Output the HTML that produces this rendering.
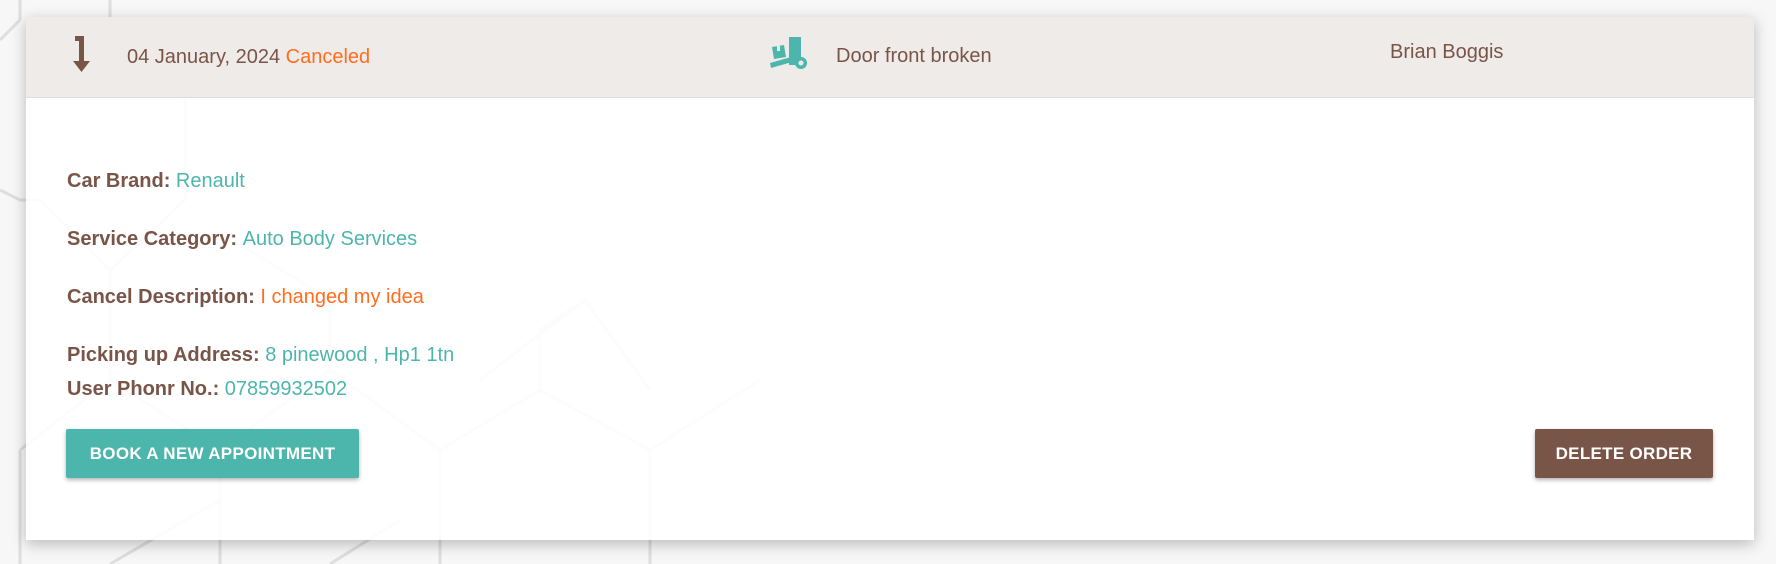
<!DOCTYPE html>
<html><head><meta charset="utf-8"><style>
html,body{margin:0;padding:0;}
body{width:1776px;height:564px;background:#f7f7f7;position:relative;overflow:hidden;font-family:"Liberation Sans",sans-serif;}
svg.bg{position:absolute;left:0;top:0;}
.card{position:absolute;left:26px;top:17px;width:1728px;height:523px;background:rgba(255,255,255,0.9);box-shadow:0 4px 14px rgba(0,0,0,0.25);}
.head{height:80px;background:#efebe9;border-bottom:1px solid #ddd;position:relative;color:#795548;font-size:20px;}
.head span{position:absolute;white-space:nowrap;}
.o{color:#ff6d1f}.t{color:#4db6ac}
.line{position:absolute;left:41px;color:#795548;font-size:20px;font-weight:bold;white-space:nowrap;}
.line b{font-weight:normal}
.btn{position:absolute;top:412px;height:49px;line-height:49px;color:#fff;font-weight:bold;font-size:17px;text-align:center;border-radius:2px;box-shadow:0 2px 4px rgba(0,0,0,0.3);letter-spacing:0.3px;}
</style></head><body>
<svg class="bg" width="1776" height="564" fill="none" stroke="#dedede" stroke-width="3">
<path d="M110 0V25M0 40L20 20M20 20V0M110 20L185 95V200L110 270L40 200M0 190L20 200L40 200M110 270V380L20 450M20 450V564M110 380L220 450V564M220 450L330 370V300L225 235M330 370L440 450L540 390V330M440 450V564M540 390L650 450V564M650 450L760 380M480 380L585 300L650 390M585 300L540 330M110 564L220 500M330 564L400 520"/>
</svg>
<div class="card">
<div class="head">
<svg style="position:absolute;left:46px;top:19px" width="20" height="38" viewBox="0 0 20 38"><path d="M3 0H12V25H18L9.5 36L1 25H7V5H3Z" fill="#795548"/></svg>
<span style="left:101px;top:29px">04 January, 2024 <span class="o" style="position:static">Canceled</span></span>
<svg style="position:absolute;left:744px;top:20px" width="42" height="34" viewBox="0 0 42 34"><g fill="#4db6ac"><rect x="19" y="0" width="12" height="28"/><circle cx="31" cy="26" r="6"/><path d="M0 26L21 20L22 25L1 31Z"/><path d="M2 10L14 8L16 20L4 22Z"/></g><circle cx="31" cy="26" r="2.5" fill="#efebe9"/><rect x="7" y="9" width="3" height="5" fill="#efebe9"/></svg>
<span style="left:810px;top:28px">Door front broken</span>
<span style="left:1364px;top:24px">Brian Boggis</span>
</div>
<div class="line" style="top:153px">Car Brand: <b class="t">Renault</b></div>
<div class="line" style="top:211px">Service Category: <b class="t">Auto Body Services</b></div>
<div class="line" style="top:269px">Cancel Description: <b class="o">I changed my idea</b></div>
<div class="line" style="top:327px">Picking up Address: <b class="t">8 pinewood , Hp1 1tn</b></div>
<div class="line" style="top:361px">User Phonr No.: <b class="t">07859932502</b></div>
<div class="btn" style="left:40px;width:293px;background:#4db6ac">BOOK A NEW APPOINTMENT</div>
<div class="btn" style="left:1509px;width:178px;background:#795548">DELETE ORDER</div>
</div>
</body></html>
